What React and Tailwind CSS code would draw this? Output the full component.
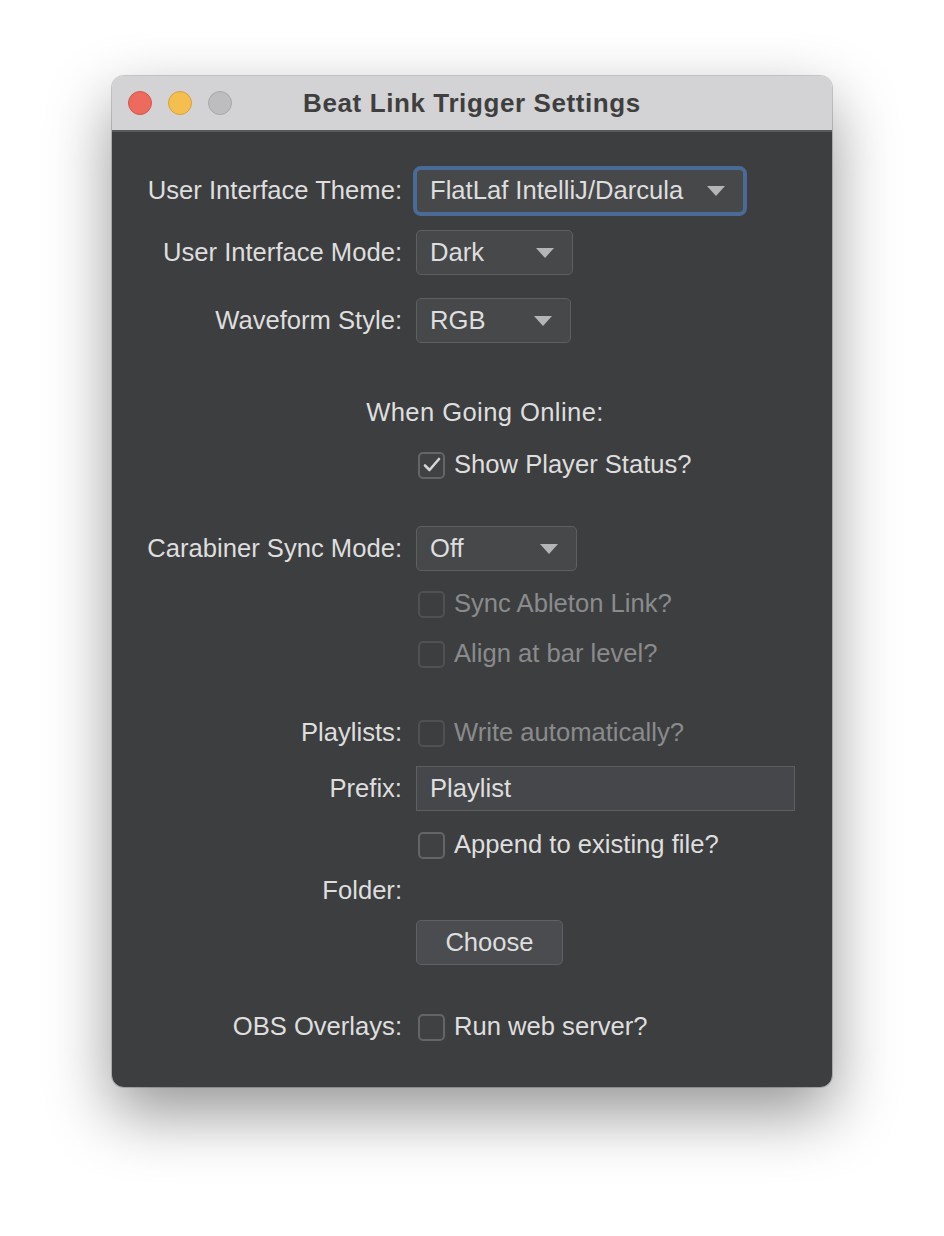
import React from 'react';

const font = { fontFamily: '"Liberation Sans", Arial, sans-serif' };

const Arrow = () => (
  <svg width="18" height="10" viewBox="0 0 18 10" className="shrink-0">
    <path d="M0 0 L18 0 L9 10 Z" fill="#b4b5b6" />
  </svg>
);

const Combo = ({ value, width, focused }) => (
  <div
    className={`flex items-center justify-between pl-[13px] pr-[18px] bg-[#46484a] ${
      focused
        ? 'h-[50px] -ml-[3px] border-[4px] border-[#4a6b98] rounded-[8px]'
        : 'h-[45px] border-[1.5px] border-[#5d5f62] rounded-[5px]'
    }`}
    style={{ width }}
  >
    <span className="text-[#dedede]">{value}</span>
    <Arrow />
  </div>
);

const Check = ({ checked, disabled, label }) => (
  <div className="flex items-center gap-[9px]">
    <div
      className={`w-[27px] h-[27px] ml-[2px] rounded-[5px] border-2 flex items-center justify-center ${
        disabled ? 'border-[#4f5153] bg-[#3d3e40]' : 'border-[#636568] bg-[#3f4143]'
      }`}
    >
      {checked && (
        <svg width="18" height="16" viewBox="0 0 18 16">
          <path d="M2 8.5 L6.5 13 L16 2" fill="none" stroke="#d4d4d4" strokeWidth="2.6" strokeLinecap="round" strokeLinejoin="round" />
        </svg>
      )}
    </div>
    <span className={disabled ? 'text-[#8a8b8c]' : 'text-[#dedede]'}>{label}</span>
  </div>
);

const Row = ({ label, className, children }) => (
  <div className={`flex items-center ${className}`}>
    <div className="w-[290px] shrink-0 text-right text-[#dedede]">{label}</div>
    <div className="pl-[14px] flex items-center">{children}</div>
  </div>
);

export default function App() {
  return (
    <div className="w-[944px] h-[1236px] bg-white pt-[76px] pl-[112px]" style={font}>
      <div className="w-[720px] rounded-[12px] overflow-hidden shadow-[0_26px_64px_rgba(0,0,0,0.42),0_0_0_1px_rgba(0,0,0,0.18)] text-[25.6px] leading-none">
        {/* title bar */}
        <div className="relative h-[56px] bg-[#d3d3d5] border-b-2 border-[#58595b] flex items-center">
          <div className="flex items-center gap-[16px] pl-[16px]">
            <div className="w-[24px] h-[24px] rounded-full bg-[#ec6a5e] border border-[#d0574a]" />
            <div className="w-[24px] h-[24px] rounded-full bg-[#f4bf4f] border border-[#d6a13f]" />
            <div className="w-[24px] h-[24px] rounded-full bg-[#bdbdbf] border border-[#a8a8aa]" />
          </div>
          <div className="absolute inset-0 flex items-center justify-center font-bold text-[#3f3f3f] text-[26px] tracking-[0.6px]">
            Beat Link Trigger Settings
          </div>
        </div>

        {/* body */}
        <div className="bg-[#3d3e40] flex flex-col pb-[47px]">
          <Row label="User Interface Theme:" className="mt-[34px] h-[50px]">
            <Combo value="FlatLaf IntelliJ/Darcula" width="334px" focused />
          </Row>
          <Row label="User Interface Mode:" className="mt-[14px] h-[45px]">
            <Combo value="Dark" width="157px" />
          </Row>
          <Row label="Waveform Style:" className="mt-[23px] h-[45px]">
            <Combo value="RGB" width="155px" />
          </Row>

          <div className="mt-[57px] h-[26px] flex items-center justify-center pl-[26px] text-[#dedede] tracking-[0.4px]">
            When Going Online:
          </div>
          <Row label="" className="mt-[26px] h-[26px]">
            <Check checked label="Show Player Status?" />
          </Row>

          <Row label="Carabiner Sync Mode:" className="mt-[48px] h-[45px]">
            <Combo value="Off" width="161px" />
          </Row>
          <Row label="" className="mt-[20px] h-[26px]">
            <Check disabled label="Sync Ableton Link?" />
          </Row>
          <Row label="" className="mt-[24px] h-[26px]">
            <Check disabled label="Align at bar level?" />
          </Row>

          <Row label="Playlists:" className="mt-[53px] h-[26px]">
            <Check disabled label="Write automatically?" />
          </Row>
          <Row label="Prefix:" className="mt-[20px] h-[45px]">
            <div className="w-[379px] h-[45px] bg-[#45474a] border-[1.5px] border-[#5d5f62] flex items-center pl-[13px] text-[#dedede]">
              Playlist
            </div>
          </Row>
          <Row label="" className="mt-[21px] h-[26px]">
            <Check label="Append to existing file?" />
          </Row>
          <Row label="Folder:" className="mt-[20px] h-[26px]" />
          <Row label="" className="mt-[16px] h-[45px]">
            <button className="w-[147px] h-[45px] rounded-[5px] bg-[#4a4c4f] border-[1.5px] border-[#5e6063] text-[#dedede] flex items-center justify-center">
              Choose
            </button>
          </Row>
          <Row label="OBS Overlays:" className="mt-[49px] h-[26px]">
            <Check label="Run web server?" />
          </Row>
        </div>
      </div>
    </div>
  );
}
